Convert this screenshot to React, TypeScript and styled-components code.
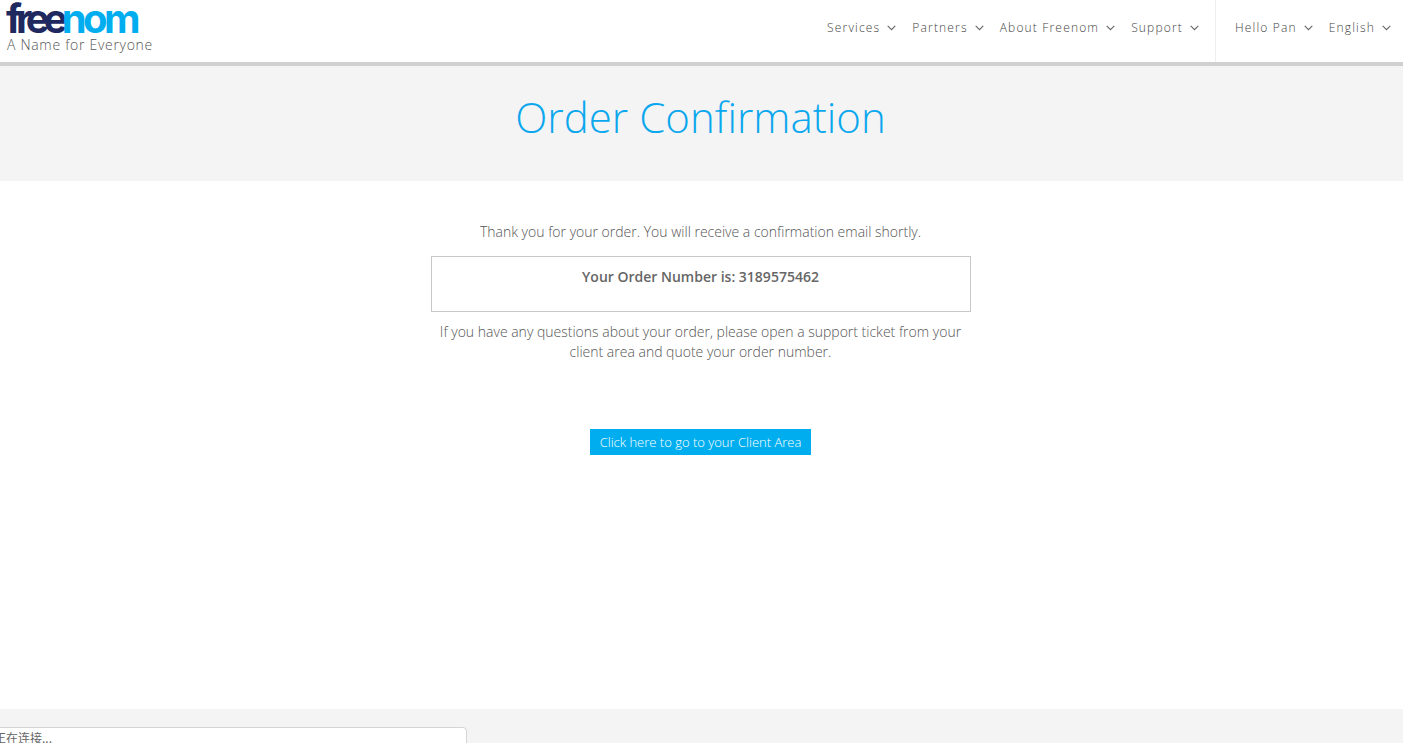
import React from "react";
import styled, { createGlobalStyle } from "styled-components";

const Global = createGlobalStyle`
  html, body { margin: 0; padding: 0; height: 100%; background: #fff; overflow: hidden; }
  #root { height: 100%; }
`;

const Page = styled.div`
  position: relative;
  height: 743px;
  overflow: hidden;
  display: flex;
  flex-direction: column;
  font-family: "Open Sans", "Noto Sans CJK SC", sans-serif;
  color: #666;
`;

const Header = styled.header`
  height: 62px;
  border-bottom: 4px solid #d0d0d0;
  display: flex;
  justify-content: space-between;
  background: #fff;
  flex: none;
`;

const Brand = styled.div`
  padding: 0 0 0 6px;
  display: flex;
  flex-direction: column;
`;

const Logo = styled.div`
  font-family: "Inter", sans-serif;
  font-weight: 700;
  font-size: 40px;
  line-height: 38px;
  height: 37px;
  white-space: nowrap;
`;

const LogoPart = styled.span<{ $tone: string; $track: number }>`
  color: ${(p) => p.$tone};
  letter-spacing: ${(p) => p.$track}px;
`;

const Tagline = styled.div`
  font-size: 14px;
  line-height: 16px;
  letter-spacing: 0.7px;
  font-weight: 300;
  color: #555;
  padding-left: 1px;
`;

const Nav = styled.nav`
  display: flex;
  align-items: stretch;
`;

const NavGroup = styled.div<{ $divided?: boolean }>`
  display: flex;
  align-items: center;
  gap: 16px;
  height: 100%;
  padding: 0 ${(p) => (p.$divided ? "12px" : "16px")} 7px ${(p) => (p.$divided ? "19px" : "0")};
  box-sizing: border-box;
  border-left: ${(p) => (p.$divided ? "1px solid #eeeeee" : "none")};
`;

const NavItem = styled.a`
  display: flex;
  align-items: center;
  gap: 7px;
  font-size: 12px;
  font-weight: 300;
  letter-spacing: 1.17px;
  color: #444;
  white-space: nowrap;
`;

const Hero = styled.section`
  height: 115px;
  background: #f4f4f4;
  display: flex;
  align-items: center;
  justify-content: center;
  padding-right: 2px;
  flex: none;
`;

const Title = styled.h1`
  margin: 0 0 15px;
  font-size: 42px;
  font-weight: 300;
  color: #0aa7ee;
  letter-spacing: 0.04px;
`;

const Main = styled.main`
  flex: 1;
  display: flex;
  flex-direction: column;
  align-items: center;
  padding: 41px 2px 0 0;
  font-size: 14px;
  font-weight: 300;
  color: #555;
`;

const Para = styled.p`
  margin: 0;
  width: 540px;
  text-align: center;
  line-height: 20px;
`;

const OrderBox = styled.div`
  box-sizing: border-box;
  width: 540px;
  height: 56px;
  margin: 14px 0 10px;
  border: 1px solid #c8c8c8;
  padding-top: 10px;
  text-align: center;
  font-weight: 600;
  line-height: 20px;
  color: #666;
`;

const ClientButton = styled.a`
  margin-top: 67px;
  height: 26px;
  width: 221px;
  background: #00aeef;
  color: #fff;
  font-size: 13px;
  font-weight: 300;
  line-height: 27px;
  text-align: center;
  white-space: nowrap;
`;

const Footer = styled.footer`
  height: 34px;
  background: #f4f4f4;
  flex: none;
`;

const StatusBubble = styled.div`
  position: absolute;
  left: -8px;
  top: 727px;
  width: 472px;
  height: 30px;
  background: #fff;
  border: 1px solid #d4d4d4;
  border-radius: 4px;
  font-size: 12px;
  line-height: 19px;
  padding-left: 1px;
  color: #666;
  font-family: "Noto Sans CJK SC", sans-serif;
`;

const Chevron = () => (
  <svg width="9" height="6" viewBox="0 0 9 6" fill="none" stroke="#666" strokeWidth="1.1">
    <path d="M0.7 0.8 L4.5 4.6 L8.3 0.8" />
  </svg>
);

const Item = ({ label }: { label: string }) => (
  <NavItem>
    {label}
    <Chevron />
  </NavItem>
);

export default function App() {
  return (
    <Page>
      <Global />
      <Header>
        <Brand>
          <Logo>
            <LogoPart $tone="#20295f" $track={-5.8}>free</LogoPart>
            <LogoPart $tone="#00aeef" $track={-3.5}>nom</LogoPart>
          </Logo>
          <Tagline>A Name for Everyone</Tagline>
        </Brand>
        <Nav>
          <NavGroup>
            <Item label="Services" />
            <Item label="Partners" />
            <Item label="About Freenom" />
            <Item label="Support" />
          </NavGroup>
          <NavGroup $divided>
            <Item label="Hello Pan" />
            <Item label="English" />
          </NavGroup>
        </Nav>
      </Header>
      <Hero>
        <Title>Order Confirmation</Title>
      </Hero>
      <Main>
        <Para>Thank you for your order. You will receive a confirmation email shortly.</Para>
        <OrderBox>Your Order Number is: 3189575462</OrderBox>
        <Para>
          If you have any questions about your order, please open a support ticket from your client area and quote your order number.
        </Para>
        <ClientButton>Click here to go to your Client Area</ClientButton>
      </Main>
      <Footer />
      <StatusBubble>正在连接...</StatusBubble>
    </Page>
  );
}
